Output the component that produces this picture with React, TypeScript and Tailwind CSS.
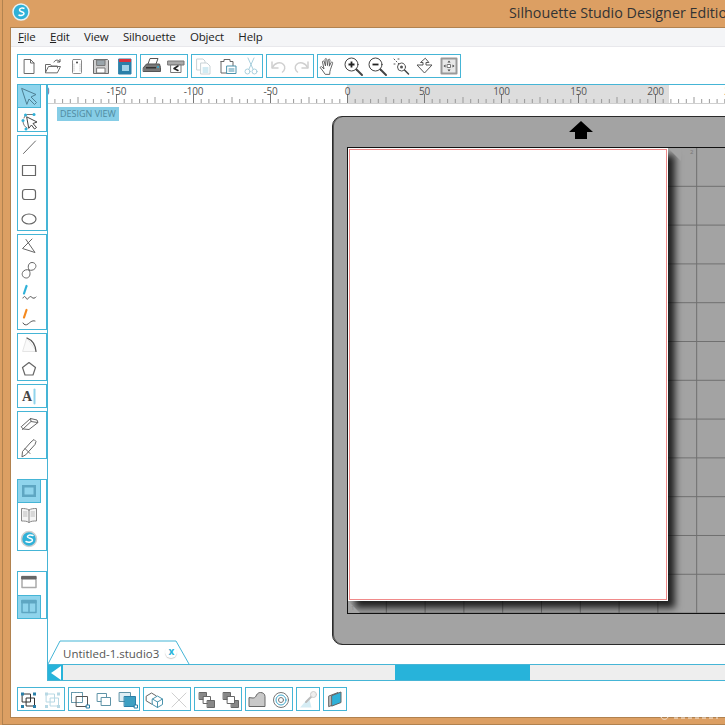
import type { ReactNode } from "react";

const SK = "#6b6b6b";

// small svg wrapper, every icon is drawn on a 24x24 box
const Ico = ({ children }: { children: ReactNode }) => (
  <svg width="24" height="24" viewBox="0 0 24 24" fill="none" stroke={SK} strokeWidth="1" strokeLinejoin="round" strokeLinecap="round">
    {children}
  </svg>
);

const Cell = ({ on, children }: { on?: boolean; children: ReactNode }) => (
  <div className={on ? "h-6 w-6 bg-[#8fd4ec] ring-1 ring-inset ring-[#45b5d6]" : "h-6 w-6"}>
    <Ico>{children}</Ico>
  </div>
);

const Group = ({ col, children }: { col?: boolean; children: ReactNode }) => (
  <div className={col ? "flex flex-col ring-1 ring-inset ring-[#45b5d6]" : "flex ring-1 ring-inset ring-[#45b5d6]"}>{children}</div>
);

const topBar: ReactNode[][] = [
  [
    <path d="M7.500 5.500h6l3.500 3.500v10.500h-9.500zM13.500 5.500v3.500h3.500" />,
    <>
      <path d="M4.500 18.500v-8h5l1 1.500h6v2M4.500 18.500l3-6h12l-3 6z" />
      <path d="M13 8c1.500-2.500 4-2.500 5.500-.5M19 5.500v2.500h-2.500" stroke="#555" />
    </>,
    <>
      <rect x="7.500" y="5.500" width="9" height="14" rx="1" stroke="#888" />
      <circle cx="12" cy="8.500" r="1" fill="#444" stroke="none" />
      <path d="M9 10v7M15 10v7" stroke="#ccc" strokeDasharray="1 1" />
    </>,
    <>
      <path d="M5.500 5.500h13l1 1v13h-15v-13z" fill="#cfcfcf" />
      <rect x="8" y="6" width="8" height="5.500" fill="#9aa5ab" stroke="#777" />
      <rect x="8" y="14" width="8" height="5" fill="#fff" stroke="#777" />
    </>,
    <>
      <rect x="6" y="5" width="12" height="15" fill="#2a7fa8" stroke="#2a7fa8" />
      <rect x="6" y="5" width="12" height="3" fill="#d8323c" stroke="none" />
      <rect x="9" y="11" width="7" height="6" fill="#9fd3e8" stroke="none" />
    </>,
  ],
  [
    <>
      <path d="M8 10l2-5.500h8l-2 5.500" fill="#fff" stroke="#555" />
      <path d="M3.500 13.500l3-3.500h13l1 3.500v4h-17z" fill="#777" stroke="#555" />
      <rect x="6" y="13" width="10" height="1.500" fill="#333" stroke="none" />
      <circle cx="18" cy="13" r="1" fill="#2fb1d8" stroke="none" />
    </>,
    <>
      <rect x="4" y="7" width="16" height="4" fill="#aaa" stroke="#777" />
      <path d="M7 11h10v7.500h-10z" fill="#fff" stroke="#777" />
      <path d="M14 12l-4 2.500 4 2" stroke="#222" strokeWidth="1.500" />
    </>,
  ],
  [
    <g stroke="#c9d2d6">
      <path d="M6 5h6l2 2v9h-8z" fill="#fff" />
      <path d="M10 9h6l3 3v8h-9z" fill="#fff" />
      <path d="M12 14h5M12 16h5M12 18h5" stroke="#a5d6e6" />
    </g>,
    <>
      <path d="M6 7.500h3v-2h6v2h3v5" stroke="#666" />
      <path d="M6 7.500v11.500h6" stroke="#666" />
      <rect x="12" y="12" width="9" height="7.500" fill="#fff" stroke="#4a93ad" />
      <path d="M14 15h5M14 17h5" stroke="#4a93ad" />
    </>,
    <g stroke="#a9cfdd">
      <path d="M9 4l5 11M15 4l-5 11" />
      <circle cx="8.500" cy="17.500" r="2.500" />
      <circle cx="15.500" cy="17.500" r="2.500" />
    </g>,
  ],
  [
    <g stroke="#cfcfcf">
      <path d="M6 8v6h6" strokeWidth="1.500" />
      <path d="M6.500 13.500c2-5 8-6 11-3 2.500 2.500 1 6-1 7.500" strokeWidth="1.500" />
    </g>,
    <g stroke="#cfcfcf">
      <path d="M18 8v6h-6" strokeWidth="1.500" />
      <path d="M17.500 13.500c-2-5-8-6-11-3-2.500 2.500-1 6 1 7.500" strokeWidth="1.500" />
    </g>,
  ],
  [
    <path d="M8 20c-1-2-3-4-4.500-6-.7-1 .7-2 1.500-1l2 2-1.500-7c-.2-1.200 1.500-1.500 1.800-.3l1.200 4.300-.5-6.500c0-1.200 1.700-1.200 1.800 0l.7 6 .8-5.500c.2-1.200 1.800-1 1.700.2l-.7 6 1.800-3.700c.5-1 2-.4 1.500.8l-2.100 6c-.5 1.500-.8 3-.8 4.700z" strokeWidth=".9" stroke="#555" />,
    <>
      <circle cx="10.500" cy="10.500" r="6.500" stroke="#444" />
      <path d="M7.500 10.500h6M10.500 7.500v6" stroke="#222" strokeWidth="1.800" strokeLinecap="butt" />
      <path d="M15.500 15.500l5.500 5.500" stroke="#444" strokeWidth="2" />
    </>,
    <>
      <circle cx="10.500" cy="10.500" r="6.500" stroke="#444" />
      <path d="M7.500 10.500h6" stroke="#222" strokeWidth="1.800" strokeLinecap="butt" />
      <path d="M15.500 15.500l5.500 5.500" stroke="#444" strokeWidth="2" />
    </>,
    <>
      <circle cx="12.500" cy="13" r="4" stroke="#555" />
      <circle cx="12.500" cy="13" r="1.500" fill="#555" stroke="none" />
      <path d="M15.500 16l4 4" stroke="#444" strokeWidth="1.500" />
      <path d="M5 5l5 5" stroke="#555" strokeDasharray="1 2" />
      <path d="M5 10h1M9 5h1" stroke="#555" />
    </>,
    <path d="M12 4.500l-4.500 4h2.500v2.500h-6l7.500 8 7.500-8h-6v-2.500h2.500z" stroke="#555" />,
    <>
      <rect x="4.500" y="4.500" width="15" height="15" fill="#e8e8e8" stroke="#999" strokeWidth="2" />
      <path d="M12 6.500l1.500 2h-3zM12 17.500l1.500-2h-3zM6.500 12l2-1.500v3zM17.500 12l-2-1.500v3z" fill="#444" stroke="none" />
      <rect x="10.500" y="10.500" width="3" height="3" fill="#fff" stroke="#777" />
    </>,
  ],
];

const sideBar: { on?: boolean; el: ReactNode }[][] = [
  [
    { on: true, el: <path d="M5 4.500l14 6-5 2.500 5.500 5.500-2 2-5.500-5.500-2 5z" stroke="#4d7f93" fill="#8fd4ec" /> },
    {
      el: (
        <>
          <path d="M7 10c.5-2 2-3 3-3.500h6M6 14c.5 3 2 5 4 6" stroke="#777" />
          <circle cx="8.500" cy="7" r="1.500" fill="#2fb1d8" stroke="none" />
          <circle cx="17" cy="6.500" r="1.500" fill="#2fb1d8" stroke="none" />
          <circle cx="6" cy="12.500" r="1.500" fill="#2fb1d8" stroke="none" />
          <circle cx="9" cy="21" r="1.500" fill="#2fb1d8" stroke="none" />
          <path d="M10 9l10 5-4 1.500 3.500 4-2 1.500-3-4-2.500 3z" fill="#fff" stroke="#444" />
        </>
      ),
    },
  ],
  [
    { el: <path d="M6.500 18.500l12-12.500" /> },
    { el: <rect x="5.500" y="6.500" width="13" height="10" stroke="#666" strokeWidth="1.200" /> },
    { el: <rect x="5.500" y="6.500" width="13" height="10" rx="2.500" stroke="#666" strokeWidth="1.200" /> },
    { el: <ellipse cx="12" cy="12" rx="7" ry="5" stroke="#666" strokeWidth="1.200" /> },
  ],
  [
    { el: <path d="M9 5.500l9 13-12.500-4 9.500-9.500" stroke="#666" /> },
    { el: <path d="M12 12C10 8 12 4.500 15 4.500c3.500 0 5 3.500 3 6-1.500 2-4.500 2-6 1.500 2 3 1 8-2.500 8-3.500 0-5-3-4-5.500 1-2.500 4.500-3.500 6.500-2.500z" stroke="#666" /> },
    {
      el: (
        <>
          <path d="M9.500 4l-2.500 7.500" stroke="#2fb1d8" strokeWidth="2.200" />
          <path d="M6 16c1-2 2-2 3 0s2 1 3-.5 2-1 3 0 3 1 4-.5" stroke="#555" />
        </>
      ),
    },
    {
      el: (
        <>
          <path d="M9.500 4l-2.500 7.500" stroke="#f58a1f" strokeWidth="2.200" />
          <path d="M6 17c1 2 3 2.500 5 1s4-4 7-3" stroke="#555" />
        </>
      ),
    },
  ],
  [
    {
      el: (
        <>
          <path d="M6 18.500h13v-1L10 5z" stroke="#e5e5e5" fill="#fafafa" />
          <path d="M10 5c5 2 8.500 7 9 13.500" stroke="#555" strokeWidth="1.200" />
        </>
      ),
    },
    { el: <path d="M12 5.500l6.500 5-2.500 7.500h-8l-2.500-7.500z" stroke="#666" strokeWidth="1.200" /> },
  ],
  [
    {
      el: (
        <>
          <text x="5" y="17" fontFamily="Liberation Serif, serif" fontWeight="700" fontSize="14" fill="#444" stroke="none">A</text>
          <path d="M17.500 5.500v14" stroke="#8fd4ec" strokeWidth="2" />
        </>
      ),
    },
  ],
  [
    { el: <path d="M4.500 15.500l9-8 6.500 1.500 1 2.500-9 7-5.500-.5zM13.500 7.500l.5 3 6.500 1M14 10.500l-8.500 8" stroke="#666" /> },
    { el: <path d="M5 21.500l.5-5 8.500-9.500 3-2.500 2 2-1 3-9 10zM8 13.500l5 5" stroke="#666" /> },
  ],
];

const viewBar: { on?: boolean; el: ReactNode }[][] = [
  [
    {
      on: true,
      el: (
        <>
          <rect x="5" y="6" width="14" height="12" fill="#5ea6c2" stroke="none" />
          <rect x="7.500" y="8.500" width="9" height="7" fill="#8fd4ec" stroke="none" />
        </>
      ),
    },
    {
      el: (
        <>
          <path d="M12 7c-2-1.500-5-1.500-7.500-1.500v12.500c3 0 5.500 0 7.500 1.500 2-1.500 4.500-1.500 7.500-1.500v-12.500c-2.500 0-5.500 0-7.500 1.500zM12 7v12.500" fill="#f4f4f4" stroke="#888" />
          <path d="M6.500 9h3.500M6.500 11h3.500M6.500 13h3.500M14 9h3.500M14 11h3.500M14 13h3.500" stroke="#bbb" />
        </>
      ),
    },
    {
      el: (
        <>
          <circle cx="12" cy="12" r="7.500" fill="#2fb1d8" stroke="#cfcfcf" strokeWidth="1.500" />
          <path d="M16 8.500c-2-1-5-.8-5.500 1-.4 2 5 1.500 5 3.500s-3.500 3-6.500 1.500" stroke="#fff" strokeWidth="1.500" />
        </>
      ),
    },
  ],
  [
    {
      el: (
        <>
          <rect x="5" y="5.500" width="14" height="11" stroke="#aaa" strokeWidth="1.500" />
          <rect x="5" y="5.500" width="14" height="2.500" fill="#666" stroke="#666" />
        </>
      ),
    },
    {
      on: true,
      el: (
        <>
          <rect x="5" y="5.500" width="14" height="12" stroke="#5ea6c2" strokeWidth="1.500" />
          <rect x="5" y="5.500" width="14" height="2.500" fill="#5ea6c2" stroke="#5ea6c2" />
          <path d="M12 8v9.500" stroke="#5ea6c2" strokeWidth="1.500" />
        </>
      ),
    },
  ],
];

const bottomBar: ReactNode[][] = [
  [
    <>
      <rect x="5.500" y="7" width="8" height="8" stroke="#333" />
      <rect x="9.500" y="11" width="8" height="8" stroke="#333" />
      <path d="M4 5.500h3v3h-3zM16 5.500h3v3h-3zM4 18h3v3h-3zM16 18h3v3h-3z" fill="#2a7fa8" stroke="none" />
    </>,
    <g stroke="#b7d8e4">
      <rect x="5.500" y="7" width="8" height="8" />
      <rect x="9.500" y="11" width="8" height="8" />
      <path d="M4 5.500h3v3h-3zM16 5.500h3v3h-3zM4 18h3v3h-3zM16 18h3v3h-3z" fill="#b7d8e4" stroke="none" />
    </g>,
  ],
  [
    <>
      <rect x="3.500" y="5.500" width="11" height="10" stroke="#5f93a7" strokeDasharray="2 1" />
      <rect x="8.500" y="9.500" width="11" height="10" stroke="#555" />
      <rect x="18.500" y="18" width="3" height="3" fill="#fff" stroke="#2a7fa8" />
    </>,
    <>
      <rect x="5.500" y="6.500" width="9" height="8" stroke="#5f93a7" />
      <rect x="9.500" y="10.500" width="9" height="8" fill="#fff" stroke="#5f93a7" />
    </>,
    <>
      <rect x="3.500" y="5.500" width="11" height="9" fill="#dfeef4" stroke="#5f93a7" />
      <rect x="8.500" y="9.500" width="11" height="10" fill="#3e9fc2" stroke="#2a7fa8" />
      <rect x="18.500" y="18" width="3" height="3" fill="#fff" stroke="#2a7fa8" />
    </>,
  ],
  [
    <>
      <path d="M3.500 9l5-3 5 3v5l-5 3-5-3z" stroke="#666" />
      <path d="M9.500 12l5-3 5 3v5.500l-5 3-5-3z" fill="#fff" stroke="#4a93ad" />
      <path d="M9.500 12l5 3 5-3M14.500 15v5.500" stroke="#4a93ad" />
    </>,
    <path d="M5 6l14 14M19 6l-14 14" stroke="#d0d0d0" />,
  ],
  [
    <>
      <rect x="5.500" y="5.500" width="7" height="7" fill="#888" stroke="#666" />
      <rect x="9.500" y="9.500" width="7" height="7" fill="#fff" stroke="#666" />
      <rect x="13.500" y="13.500" width="7" height="7" fill="#888" stroke="#666" />
    </>,
    <>
      <rect x="5.500" y="5.500" width="7" height="7" fill="#888" stroke="#666" />
      <rect x="13.500" y="13.500" width="7" height="7" fill="#888" stroke="#666" />
      <rect x="9.500" y="9.500" width="7" height="7" fill="#fff" stroke="#666" />
    </>,
  ],
  [
    <path d="M4 11v8.500h16v-10c0-2.500-2-4-4.500-4-2 0-3 1-4 2.500-.5 1.500-1.500 3-3 3z" fill="#c9c9c9" stroke="#666" />,
    <g stroke="#777">
      <circle cx="12" cy="13" r="7.500" />
      <circle cx="12" cy="13" r="5" stroke="#3fa8cc" />
      <circle cx="12" cy="13" r="2.500" />
    </g>,
  ],
  [
    <>
      <path d="M4 20.500l9-10 2.500 10z" fill="#d5ecf4" stroke="none" />
      <path d="M10 15l6.500-6.500" stroke="#bbb" strokeWidth="2" />
      <circle cx="17.500" cy="7.500" r="3" fill="#eee" stroke="#ccc" />
    </>,
  ],
  [
    <>
      <path d="M6 9l9-3.500v10.500l-9 3.500z" fill="#bbb" stroke="#666" />
      <path d="M9 8.500l9-3.500v10.500l-9 3.500z" fill="#2fb1d8" stroke="#666" />
    </>,
  ],
];

// ruler: 0 sits at x=299.5 in this box, 50 units = 77px
const Ruler = () => {
  const ticks = [];
  for (let i = -40; i < 60; i++) {
    const x = 299.5 + i * 7.7;
    const h = i % 10 === 0 ? 9 : i % 5 === 0 ? 6 : 4;
    ticks.push(<line key={i} x1={x} x2={x} y1={18} y2={18 - h} stroke={i % 10 === 0 ? "#777" : "#999"} strokeWidth="1" />);
  }
  const labels = [-200, -150, -100, -50, 0, 50, 100, 150, 200, 250];
  return (
    <svg width="677" height="19" className="block">
      {ticks}
      {labels.map((n) => (
        <text key={n} x={299.5 + (n / 50) * 77} y={10} textAnchor="middle" fontSize="10" letterSpacing="-0.2" fill="#555" fontFamily="Open Sans, sans-serif">
          {n}
        </text>
      ))}
    </svg>
  );
};

export default function App() {
  return (
    <div className="relative flex h-[725px] w-[725px] overflow-hidden bg-[#dc9f63] font-['Open_Sans',sans-serif]">
      <div className="w-[2px]" />
      <div className="w-[1px] bg-[#b1824f]" />
      <div className="flex min-w-0 flex-1 flex-col">
        <div className="flex h-[27px] shrink-0 items-center text-[#333]">
          <svg width="18" height="18" viewBox="0 0 18 18" className="ml-[9px] mb-[4px] shrink-0">
            <circle cx="9" cy="9" r="8" fill="#2fb1d8" stroke="#e6f3f7" strokeWidth="1.500" />
            <path d="M12.500 5.500c-2-1-5-.5-5 1.500 0 2 4.500 1.500 4.500 3.500 0 1.800-3 2.500-5.500 1.500" fill="none" stroke="#fff" strokeWidth="1.500" />
          </svg>
          <span className="ml-[479px] mb-[2px] whitespace-nowrap text-[14.3px]">Silhouette Studio Designer Edition</span>
        </div>

        <div className="ml-[7px] flex h-[691px] shrink-0 flex-col border-t border-l border-b border-[#b1824f] bg-white">
          {/* menu */}
          <div className="flex h-[19px] shrink-0 items-center gap-[14.3px] border-b border-[#e8e8ec] bg-[#f4f5f7] pl-[7px] text-[11.5px] tracking-[-0.15px] text-[#222]">
            <span><u>F</u>ile</span>
            <span><u>E</u>dit</span>
            <span>View</span>
            <span>Silhouette</span>
            <span>Object</span>
            <span>Help</span>
          </div>

          {/* main toolbar */}
          <div className="flex h-[37px] shrink-0 gap-[3px] pl-[6px] pt-[7px]">
            {topBar.map((g, i) => (
              <div key={i} className="h-6">
                <Group>
                  {g.map((el, j) => (
                    <Cell key={j}>{el}</Cell>
                  ))}
                </Group>
              </div>
            ))}
          </div>

          <div className="flex min-h-0 flex-1">
            {/* tools */}
            <div className="flex w-[36px] shrink-0 flex-col pl-[6px]">
              <div className="flex flex-col gap-[3px]">
                {sideBar.map((g, i) => (
                  <Group col key={i}>
                    {g.map((c, j) => (
                      <Cell key={j} on={i === 0 && j === 0}>{c.el}</Cell>
                    ))}
                  </Group>
                ))}
              </div>
              <div className="mt-[20px] flex flex-col gap-[20px]">
                {viewBar.map((g, i) => (
                  <Group col key={i}>
                    {g.map((c, j) => (
                      <Cell key={j} on={c.on}>{c.el}</Cell>
                    ))}
                  </Group>
                ))}
              </div>
            </div>

            {/* canvas */}
            <div className="flex min-w-0 flex-1 flex-col self-start border-l border-t border-[#45b5d6]">
              <div className="relative h-[19px] shrink-0 overflow-hidden">
                <div className="absolute top-0 left-[299px] h-[19px] w-[322px] bg-[#dddddd]" />
                <div className="absolute bottom-0 left-0 h-[1px] w-full bg-[#cfcfcf]" />
                <div className="absolute top-0 left-0"><Ruler /></div>
              </div>

              <div className="relative h-[560px] shrink-0 overflow-hidden pl-[284px] pt-[12px]">
                <div className="absolute top-[3px] left-[9px] bg-[#86cde6] px-[3px] py-[1px] text-[9px] leading-[12px] text-[#4f8aa0]">DESIGN VIEW</div>

                <div className="h-[529px] w-[800px] rounded-[10px] border border-[#2a2a2a] bg-[#a3a3a3] shadow-[inset_1px_0_0_#555]">
                  <div className="flex h-[30px] justify-start pl-[236px] pt-[4px]">
                    <svg width="24" height="19" viewBox="0 0 24 19">
                      <path d="M12 0l12 11h-6v7h-12v-7h-6z" fill="#000" />
                    </svg>
                  </div>
                  <div className="relative ml-[14px] h-[467px] overflow-hidden border border-r-0 border-[#111] bg-[linear-gradient(to_right,transparent_calc(100%-1px),#6f6f6f_calc(100%-1px)),linear-gradient(to_bottom,transparent_calc(100%-1px),#6f6f6f_calc(100%-1px))] bg-[size:38.800px_38.800px]">
                    <div className="h-[453px] w-[320px] border border-white shadow-[7px_7px_7px_rgba(0,0,0,0.8)]">
                      <div className="h-full w-full border border-[#f08a8a] bg-white" />
                    </div>
                    <div className="absolute top-0 left-[320px] h-[13px] w-[13px] bg-[#a3a3a3] [clip-path:polygon(0_0,100%_0,100%_100%)]" />
                    <div className="absolute top-[453px] left-0 h-[13px] w-[13px] bg-[#a3a3a3] [clip-path:polygon(0_0,0_100%,100%_100%)]" />
                    <span className="absolute top-0 left-[342px] text-[6px] leading-[8px] text-[#777]">2</span>
                    <span className="absolute top-[456px] left-[3px] text-[6px] leading-[8px] text-[#888]">1</span>
                  </div>
                </div>

                {/* file tab */}
                <div className="absolute bottom-0 left-0 flex h-[24px] w-[142px] items-center pl-[15px] pt-[3px] text-[11.5px] text-[#555]">
                  <svg width="142" height="24" viewBox="0 0 142 24" className="absolute top-0 left-0">
                    <path d="M0 24l12-23h116l13 23" fill="#fff" stroke="#45b5d6" />
                  </svg>
                  <span className="relative whitespace-nowrap">Untitled-1.studio3</span>
                  <span className="relative ml-[6px] mb-[4px] flex h-[12px] w-[12px] items-center justify-center rounded-full text-[10px] font-bold text-[#27b3da] shadow-[0_1px_1px_rgba(0,0,0,0.2)]">x</span>
                </div>
              </div>

              {/* scroller */}
              <div className="flex h-[17px] shrink-0 border-y border-[#45b5d6]">
                <div className="flex w-[15px] items-center justify-center bg-[#27b3da]">
                  <div className="h-0 w-0 border-y-[7px] border-r-[10px] border-y-transparent border-r-white" />
                </div>
                <div className="w-[332px] bg-[#eeeeee]" />
                <div className="w-[135px] bg-[#27b3da]" />
                <div className="flex-1 bg-[#eeeeee]" />
              </div>
            </div>
          </div>

          {/* bottom toolbar */}
          <div className="flex h-[36px] shrink-0 gap-[3px] pl-[6px] pt-[6px]">
            {bottomBar.map((g, i) => (
              <div key={i} className="h-6">
                <Group>
                  {g.map((el, j) => (
                    <Cell key={j}>{el}</Cell>
                  ))}
                </Group>
              </div>
            ))}
          </div>
        </div>
        <div className="h-[6px] shrink-0" />
        <div className="h-[1px] shrink-0 bg-[#b1824f]" />
      </div>

      {/* faint watermark marks on the bottom edge */}
      <svg width="62" height="4" viewBox="0 0 62 4" className="absolute top-[717px] left-[660px]">
        <path d="M1 0c1 3 6 3 7 0" fill="none" stroke="#fff" strokeOpacity=".7" />
        <path d="M14 1h44" stroke="#fff" strokeOpacity=".55" strokeWidth="1.500" strokeDasharray="4 3" />
      </svg>
    </div>
  );
}
